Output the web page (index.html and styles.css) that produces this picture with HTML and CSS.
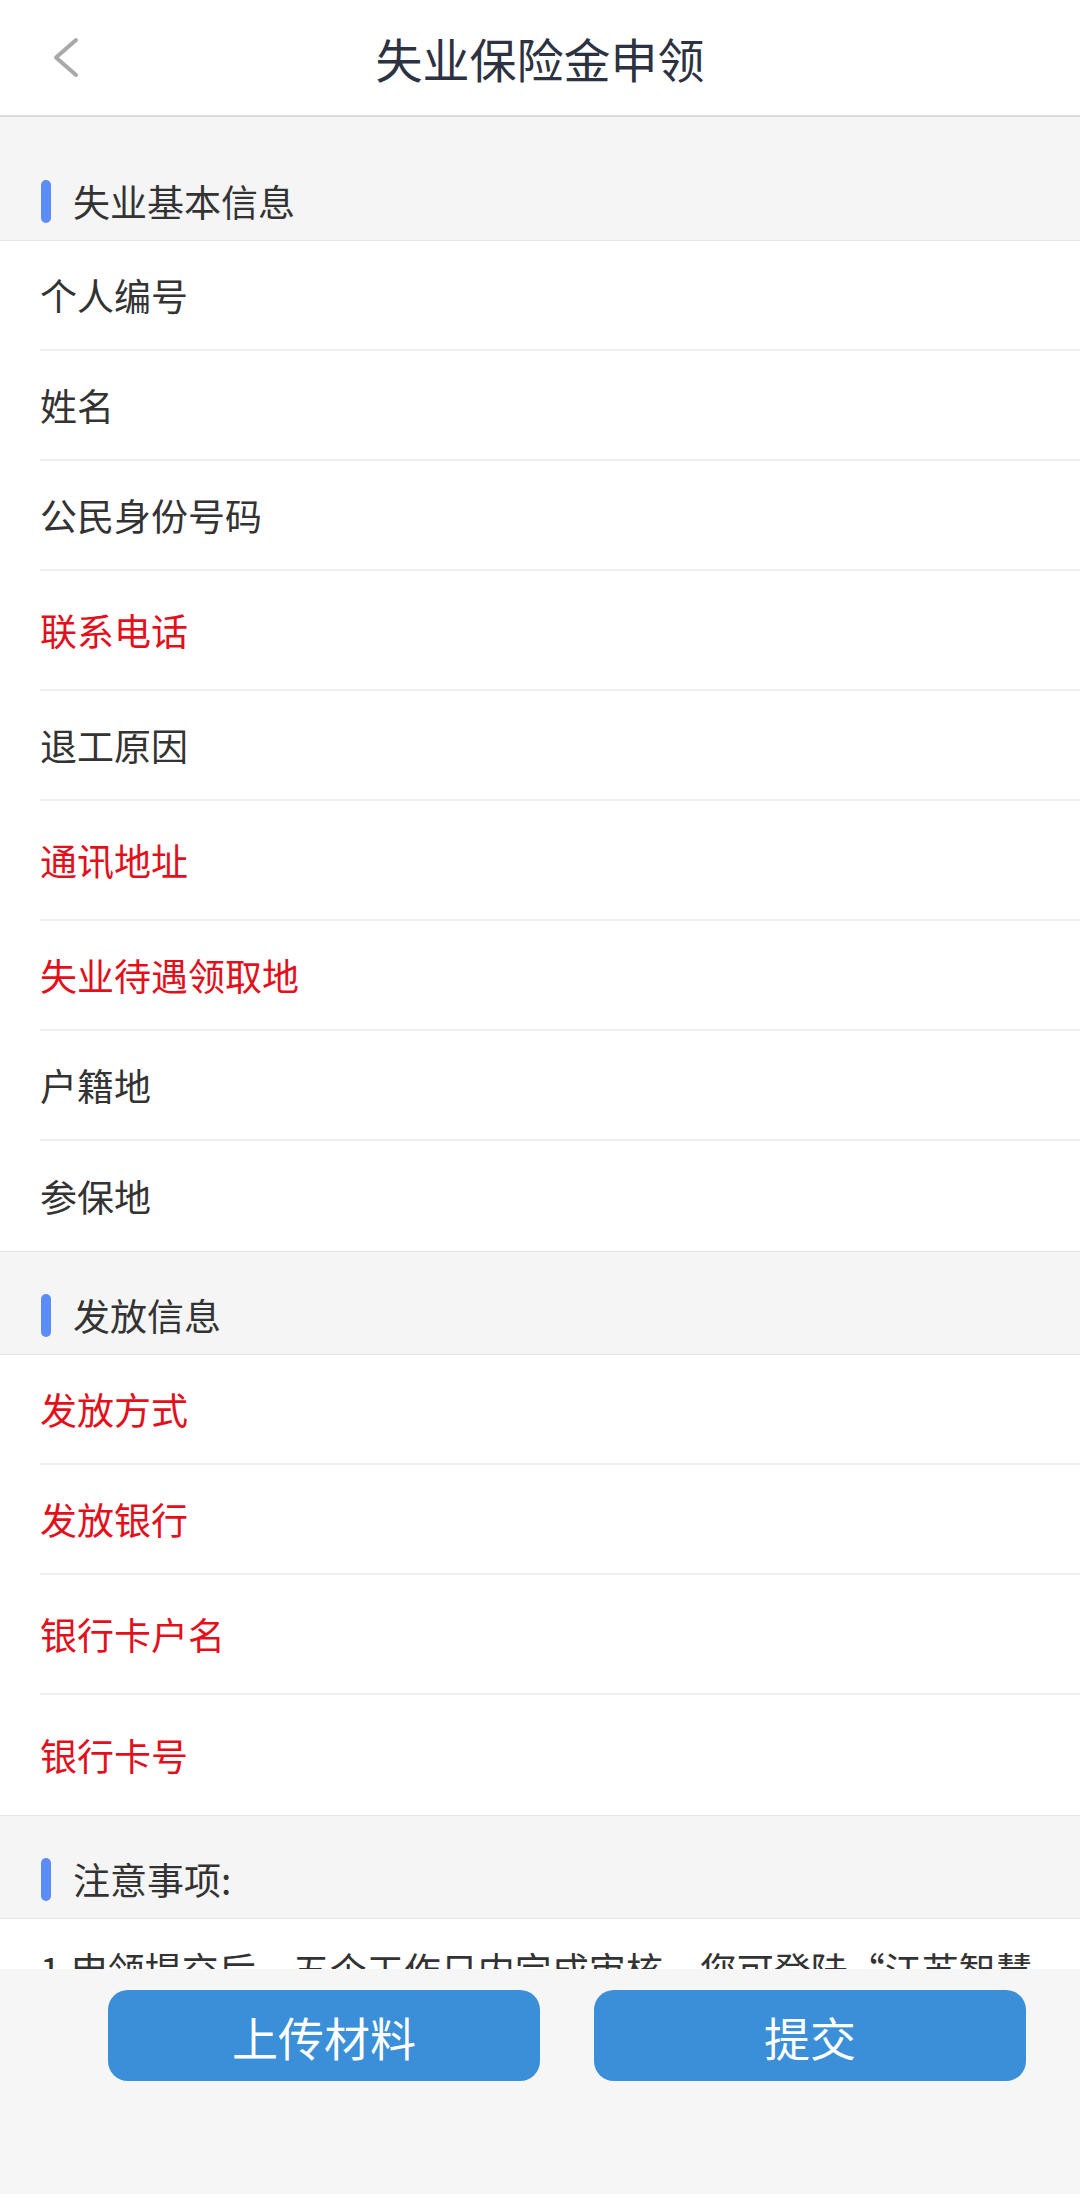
FILE: index.html
```html
<!DOCTYPE html>
<html lang="zh-CN">
<head>
    <meta charset="UTF-8">
    <meta name="viewport" content="width=device-width, initial-scale=1.0">
    <title>失业保险金申领</title>
    <link rel="stylesheet" href="styles.css">
</head>
<body>

<div class="page">
    <div class="header">
        <svg class="back" width="32" height="46" viewBox="0 0 32 46">
            <polyline points="26,5 6,22.5 26,40" fill="none" stroke="#a9a9a9" stroke-width="4" stroke-linecap="round" stroke-linejoin="round"/>
        </svg>
        <h1>失业保险金申领</h1>
    </div>

    <div class="main">
        <div class="group">
            <div class="group-title"><span class="bar"></span>失业基本信息</div>
            <div class="group-body">
                <div class="row">个人编号</div>
                <div class="row">姓名</div>
                <div class="row">公民身份号码</div>
                <div class="row row-tall required">联系电话</div>
                <div class="row">退工原因</div>
                <div class="row row-tall required">通讯地址</div>
                <div class="row required">失业待遇领取地</div>
                <div class="row">户籍地</div>
                <div class="row">参保地</div>
            </div>
        </div>

        <div class="group">
            <div class="group-title"><span class="bar"></span>发放信息</div>
            <div class="group-body">
                <div class="row required">发放方式</div>
                <div class="row required">发放银行</div>
                <div class="row row-tall required">银行卡户名</div>
                <div class="row row-tall required">银行卡号</div>
            </div>
        </div>

        <div class="group">
            <div class="group-title"><span class="bar"></span>注意事项:</div>
            <div class="notes">
                <p>1.申领提交后，五个工作日内完成审核，您可登陆“江苏智慧人社”APP查询审核结果。</p>
                <p>2.审核通过后，失业保险金将按月发放至您填写的银行卡。</p>
            </div>
        </div>
    </div>

    <div class="footer">
        <button class="btn">上传材料</button>
        <button class="btn">提交</button>
    </div>
</div>

</body>
</html>
```

FILE: styles.css
```css
* {
    box-sizing: border-box;
}
body {
    margin: 0;
    font-family: "Noto Sans CJK SC", "Noto Sans", sans-serif;
    background-color: #f5f5f5;
    color: #333;
}
.page {
    display: flex;
    flex-direction: column;
    height: 100vh;
}
.header {
    display: flex;
    align-items: center;
    justify-content: center;
    position: relative;
    height: 117px;
    background: white;
    border-bottom: 2px solid #dadada;
    flex-shrink: 0;
}
.header h1 {
    margin: 0;
    font-size: 47px;
    font-weight: 400;
    color: #2d3242;
}
.back {
    position: absolute;
    left: 50px;
    top: 35px;
}
.main {
    flex: 1;
    overflow: hidden;
    padding-top: 21px;
}
.group-title {
    display: flex;
    align-items: flex-start;
    height: 103px;
    padding: 42px 0 0 41px;
    font-size: 37px;
    line-height: 43px;
    border-bottom: 1px solid #e6e6e6;
}
.bar {
    width: 10px;
    height: 43px;
    border-radius: 5px;
    background-color: #5b8cf7;
    margin-right: 22px;
}
.group-body {
    background: white;
    border-bottom: 1px solid #e6e6e6;
}
.row {
    display: flex;
    align-items: center;
    height: 110px;
    margin-left: 40px;
    font-size: 37px;
    border-bottom: 2px solid #efefef;
}
.row:last-child {
    border-bottom: none;
}
.row-tall {
    height: 120px;
}
.required {
    color: #e3101c;
}
.notes {
    background: white;
    padding: 21px 40px;
    font-size: 37px;
    line-height: 1.6;
}
.notes p {
    margin: 0;
}
.footer {
    display: flex;
    gap: 54px;
    height: 225px;
    padding: 21px 54px 0 108px;
    background-color: #f6f6f6;
    flex-shrink: 0;
}
.btn {
    flex: 1;
    height: 91px;
    border: none;
    border-radius: 20px;
    background-color: #3a8fd8;
    color: white;
    font-family: inherit;
    font-size: 46px;
    cursor: pointer;
}
```
